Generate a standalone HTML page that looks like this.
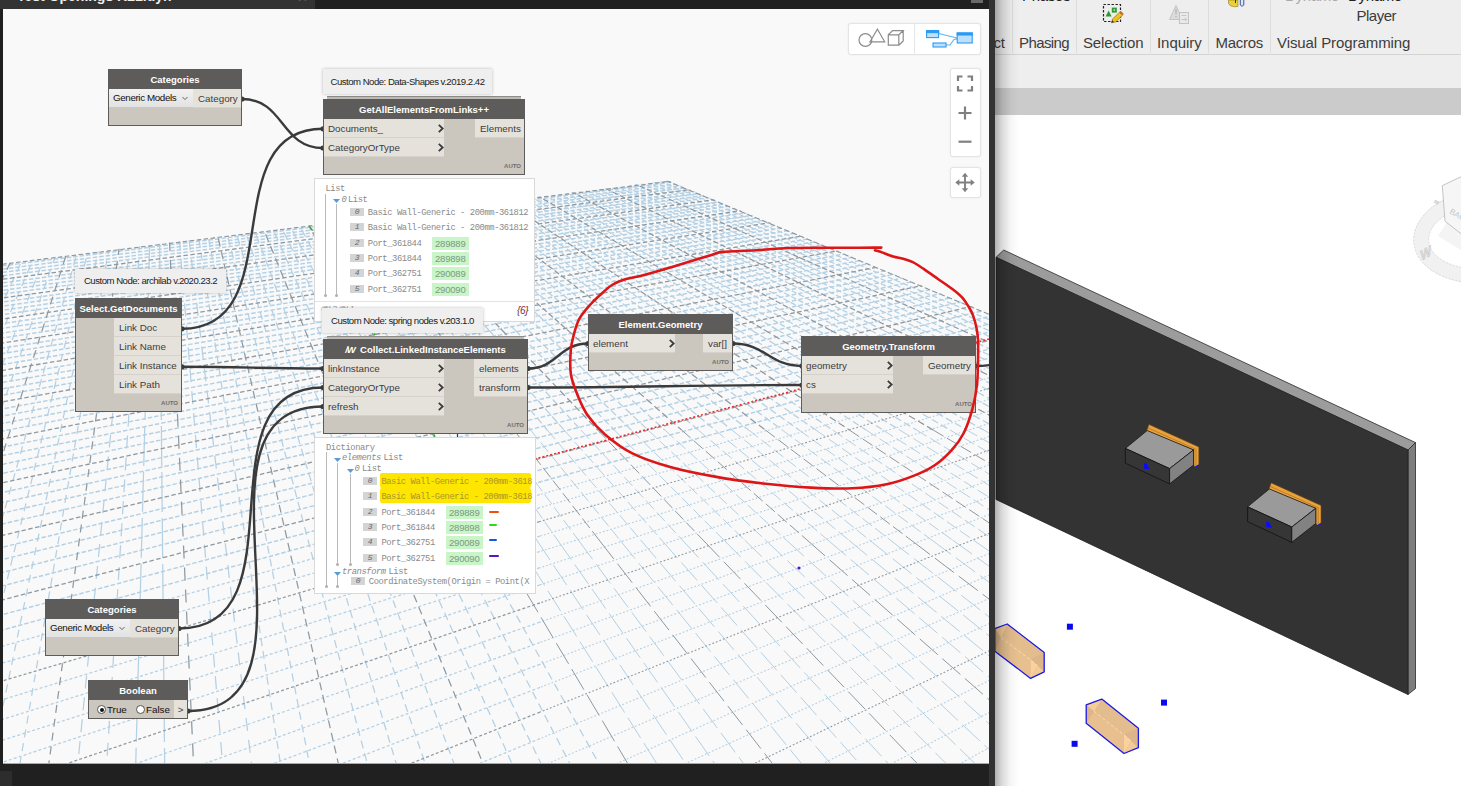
<!DOCTYPE html><html><head><meta charset="utf-8"><title>Dynamo - Revit</title><style>
html,body{margin:0;padding:0}
body{width:1461px;height:786px;overflow:hidden;position:relative;background:#fff;font-family:"Liberation Sans",sans-serif}
.abs{position:absolute}
#revit{position:absolute;left:0;top:0;width:1461px;height:786px;background:#fff}
#ribbon{position:absolute;left:990px;top:0;width:471px;height:54px;background:#eee;border-bottom:1px solid #d4d4d4}
#ribbon .sep{position:absolute;top:0;width:1px;height:53px;background:#dcdcdc}
#ribbon .lbl{position:absolute;top:34px;font-size:15px;line-height:18px;color:#3c3c3c;white-space:pre}
#band1{position:absolute;left:990px;top:55px;width:471px;height:33px;background:#eee}
#band2{position:absolute;left:990px;top:88px;width:471px;height:27px;background:#cbcbcb}
#dyn{position:absolute;left:0;top:0;width:995px;height:786px;background:#202020}
#tab{position:absolute;left:0;top:0;width:315px;height:9px;background:#333}
#canvas{position:absolute;left:3px;top:9px;width:986px;height:754px;background:#f9f9f9;overflow:hidden}
#rborder{position:absolute;left:989px;top:0;width:6px;height:786px;background:#333}
#shadow{position:absolute;left:995px;top:0;width:24px;height:786px;background:linear-gradient(to right,rgba(0,0,0,.30),rgba(0,0,0,.14) 30%,rgba(0,0,0,.04) 65%,rgba(0,0,0,0))}
.node{position:absolute;background:#cbc6be;border:1px solid #5e5c5a;box-sizing:border-box}
.node .hd{position:absolute;left:0;top:0;right:0;height:19px;background:#5e5c5a;color:#fff;font-weight:bold;font-size:9.5px;line-height:19px;text-align:center;white-space:pre}
.port{position:absolute;height:19px;background:#e5e2dc;color:#3c3c3c;font-size:9.8px;line-height:19px;white-space:pre;box-sizing:border-box}
.port.in{left:0;padding-left:4px;border-bottom:1px solid #d6d2cb}
.port.out{right:0;text-align:left;padding-left:5px;border-bottom:1px solid #d6d2cb}
.chev{position:absolute;right:0px;top:4.5px;width:7.2px;height:9px}
.auto{position:absolute;right:3px;bottom:5px;font-size:6px;font-weight:bold;color:#6f6c68;letter-spacing:0}
.cnl{position:absolute;background:#efefef;color:#222;font-size:9.6px;letter-spacing:-0.5px;white-space:pre;box-shadow:0 0 3px rgba(0,0,0,.25);box-sizing:border-box;text-align:center}
.watch{position:absolute;background:#fff;border:1px solid #d9d9d9;box-sizing:border-box;font-family:"Liberation Mono",monospace;font-size:8.8px;letter-spacing:-0.42px;color:#8a8a8a;white-space:pre;overflow:hidden}
.watch .t{position:absolute;line-height:10px;height:10px}
.watch .ix{position:absolute;width:14px;height:8px;background:#d4d4d4;color:#666;font-style:italic;text-align:center;line-height:8px;font-size:8px}
.watch .id{position:absolute;background:#c9f5c9;color:#7a9a80;height:13px;line-height:13px;padding:0 3px;font-family:"Liberation Sans",sans-serif;font-size:9.5px;letter-spacing:-0.2px}
.watch .vl{position:absolute;width:1px;background:#b9b9b9}
.ctl{position:absolute;background:#fff;border:1px solid #e4e4e4;border-radius:3px;box-sizing:border-box;box-shadow:0 0 2px rgba(0,0,0,.08)}
</style></head><body>
<div id="revit">
<div id="ribbon">
<div class="sep" style="left:22px"></div>
<div class="sep" style="left:86px"></div>
<div class="sep" style="left:160px"></div>
<div class="sep" style="left:218px"></div>
<div class="sep" style="left:280px"></div>
<div class="lbl" style="left:3.5px;letter-spacing:-0.3px">ct</div>
<div class="lbl" style="left:29px;letter-spacing:-0.6px">Phasing</div>
<div class="lbl" style="left:93px;letter-spacing:-0.15px">Selection</div>
<div class="lbl" style="left:167px;letter-spacing:-0.05px">Inquiry</div>
<div class="lbl" style="left:225.5px;letter-spacing:-0.3px">Macros</div>
<div class="lbl" style="left:287px;letter-spacing:-0.08px">Visual Programming</div>
<div class="lbl" style="left:366.5px;top:7px;letter-spacing:-0.5px">Player</div>
<div class="lbl" style="left:32px;top:-13.2px;letter-spacing:-0.3px;color:#222">Phases</div>
<div class="lbl" style="left:295px;top:-13px;letter-spacing:-0.3px;color:#aaa">Dynamo</div>
<div class="lbl" style="left:358px;top:-13px;letter-spacing:-0.3px;color:#222">Dynamo</div>
<svg class="abs" style="left:0;top:0" width="471" height="54" viewBox="990 0 471 54">
<rect x="1103.5" y="4.5" width="17" height="17" fill="none" stroke="#222" stroke-width="1.2" stroke-dasharray="2.4 1.6"/>
<path d="M1105.6 16.4L1108.6 10.6L1111.6 16.4Z" fill="#2f9a2f"/><rect x="1111.8" y="7.6" width="5" height="5" fill="#2f9a2f"/><rect x="1113.5" y="9.2" width="1.6" height="1.6" fill="#b8e8b8"/>
<path d="M1111.4 22.8L1112.6 19L1119.4 12.2L1122.6 15.2L1115.6 22Z" fill="#f2c21a" stroke="#7a5a20" stroke-width="0.6"/><path d="M1119.4 12.2L1120.8 10.9L1123.9 13.9L1122.6 15.2Z" fill="#c07030"/><path d="M1111.4 22.8L1112.2 20.2L1114 22Z" fill="#333"/>
<path d="M1169.5 19.5L1176 5.5L1182.5 19.5Z" fill="#dcdcdc" stroke="#c4c4c4" stroke-width="1"/><path d="M1176 9V14.5M1176 16V17.6" stroke="#bdbdbd" stroke-width="1.6"/>
<rect x="1179.5" y="12.5" width="9" height="11" fill="#e9e9e9" stroke="#c2c2c2" stroke-width="1"/><path d="M1181.5 15.5H1186.5M1181.5 19.5H1186.5M1185 18L1186.8 19.5L1185 21" stroke="#c2c2c2" stroke-width="0.9" fill="none"/>
<path d="M1228.5 0V3.5Q1230 6.8 1234.5 6.8L1238 6.4V0Z" fill="#e9cf3a" stroke="#8a7a20" stroke-width="0.6"/><path d="M1240.3 0V5Q1242 7.6 1243.8 5V0" fill="#dfe6f2" stroke="#3a5a9a" stroke-width="1"/><path d="M1235.5 0V3" stroke="#333" stroke-width="1"/>
</svg>
</div><div id="band1"></div><div id="band2"></div>
<svg class="abs" style="left:990px;top:115px" width="471" height="671" viewBox="990 115 471 671">
<g fill="none"><ellipse cx="1483" cy="236" rx="62" ry="39.5" stroke="#f1f1f1" stroke-width="15" transform="rotate(-6 1483 236)"/><ellipse cx="1483" cy="236" rx="69.5" ry="46.5" stroke="#d2d2d2" stroke-width="0.8" stroke-dasharray="2 1.5" transform="rotate(-6 1483 236)"/><ellipse cx="1483" cy="236" rx="54.5" ry="32.5" stroke="#d8d8d8" stroke-width="0.8" stroke-dasharray="2 1.5" transform="rotate(-6 1483 236)"/></g>
<path d="M1447 222L1470 238L1461 250L1438 236Z" fill="#f4f4f4"/>
<path d="M1442.3 185.6L1471 172V241.5L1445 221.2Z" fill="#f6f6f6" stroke="#bdbdbd" stroke-width="0.9"/>
<text x="0" y="0" font-family="Liberation Sans, sans-serif" font-size="8" fill="#c4c8cc" transform="translate(1449 213) rotate(30)">BACK</text>
<text x="0" y="0" font-family="Liberation Sans, sans-serif" font-size="13" font-weight="bold" fill="#dcdcdc" stroke="#c4c4c4" stroke-width="0.4" transform="translate(1421 261) rotate(-30) skewX(-25)">W</text>
<text x="0" y="0" font-family="Liberation Sans, sans-serif" font-size="6" font-weight="bold" fill="#d8d8d8" stroke="#c6c6c6" stroke-width="0.3" transform="translate(1437 205) rotate(-55)">S</text>
<polygon points="996.0,257.3 1003.7,250.0 1415.5,442.6 1408.0,450.0" fill="#9c9c9c" stroke="#2a2a2a" stroke-width="0.8" stroke-linejoin="round"/>
<polygon points="1408.0,450.0 1415.5,442.6 1415.5,688.5 1408.0,694.5" fill="#7e7e7e" stroke="#2a2a2a" stroke-width="0.8" stroke-linejoin="round"/>
<polygon points="996.0,257.3 1408.0,450.0 1408.0,694.5 996.0,499.5" fill="#333333" stroke="#222" stroke-width="0.8" stroke-linejoin="round"/>
<polygon points="1146.7,431.0 1149.0,424.5 1198.8,447.1 1198.8,464.4 1195.6,467.4 1193.6,464.9 1193.6,449.9" fill="#e8a33d" stroke="#7a4a10" stroke-width="0.6" stroke-linejoin="round"/><path d="M1147.8 427.9L1196.0 449.3L1196.0 465.9" fill="none" stroke="#b87420" stroke-width="0.8"/><polygon points="1125.4,448.4 1147.2,430.5 1193.6,449.9 1169.6,468.6" fill="#9a9a9a" stroke="#1a1a1a" stroke-width="0.8" stroke-linejoin="round"/><polygon points="1125.4,448.4 1169.6,468.6 1169.6,483.9 1125.4,463.2" fill="#363636" stroke="#111" stroke-width="0.8" stroke-linejoin="round"/><polygon points="1169.6,468.6 1193.6,449.9 1193.6,465.1 1169.6,483.9" fill="#828282" stroke="#111" stroke-width="0.8" stroke-linejoin="round"/><path d="M1144.0 468.6v-5.4l2.8 0.6l3 5.6z" fill="#0a0aff"/><path d="M1194.6 467.5l4 -2.4" stroke="#1010ff" stroke-width="1.2"/>
<polygon points="1268.9,489.4 1271.2,482.9 1321.0,505.5 1321.0,522.8 1317.8,525.8 1315.8,523.3 1315.8,508.3" fill="#e8a33d" stroke="#7a4a10" stroke-width="0.6" stroke-linejoin="round"/><path d="M1270.0 486.3L1318.2 507.7L1318.2 524.3" fill="none" stroke="#b87420" stroke-width="0.8"/><polygon points="1247.6,506.8 1269.4,488.9 1315.8,508.3 1291.8,527.0" fill="#9a9a9a" stroke="#1a1a1a" stroke-width="0.8" stroke-linejoin="round"/><polygon points="1247.6,506.8 1291.8,527.0 1291.8,542.3 1247.6,521.6" fill="#363636" stroke="#111" stroke-width="0.8" stroke-linejoin="round"/><polygon points="1291.8,527.0 1315.8,508.3 1315.8,523.5 1291.8,542.3" fill="#828282" stroke="#111" stroke-width="0.8" stroke-linejoin="round"/><path d="M1266.2 527.0v-5.4l2.8 0.6l3 5.6z" fill="#0a0aff"/><path d="M1316.8 525.9l4 -2.4" stroke="#1010ff" stroke-width="1.2"/>
<polygon points="994.8,628.6 1007.2,624.0 1044.2,652.4 1044.2,671.8 1030.6,678.4 994.8,651.2" fill="#e9c292"/><polygon points="994.8,628.6 1007.2,624.0 1044.2,652.4 1030.6,659.0" fill="#e4bd8e"/><polygon points="994.8,628.6 1030.6,659.0 1030.6,678.4 994.8,651.2" fill="#e8c090"/><polygon points="1030.6,659.0 1044.2,652.4 1044.2,671.8 1030.6,678.4" fill="#ddb58a"/><polygon points="1030.6,659.0 1030.6,678.4 1037.4,665.4" fill="#f9d19c"/><polygon points="1030.6,678.4 1044.2,671.8 1037.4,665.4" fill="#f4ca96"/><polygon points="994.8,628.6 1007.2,624.0 1001.0,637.6" fill="#f6cd9a"/><polygon points="994.8,628.6 994.8,651.2 1001.0,637.6" fill="#dcb58a"/><path d="M1001.0 637.6L1037.4 665.4" fill="none" stroke="#f7dcb4" stroke-width="1" stroke-dasharray="3 2.5"/><polygon points="994.8,628.6 1007.2,624.0 1044.2,652.4 1044.2,671.8 1030.6,678.4 994.8,651.2" fill="none" stroke="#1a1ae6" stroke-width="1.3" stroke-linejoin="round"/>
<polygon points="1086.2,704.9 1101.8,699.1 1138.4,728.2 1138.4,747.7 1124.0,753.5 1086.2,723.2" fill="#e9c292"/><polygon points="1086.2,704.9 1101.8,699.1 1138.4,728.2 1124.0,734.0" fill="#e4bd8e"/><polygon points="1086.2,704.9 1124.0,734.0 1124.0,753.5 1086.2,723.2" fill="#e8c090"/><polygon points="1124.0,734.0 1138.4,728.2 1138.4,747.7 1124.0,753.5" fill="#ddb58a"/><polygon points="1124.0,734.0 1124.0,753.5 1131.2,740.9" fill="#f9d19c"/><polygon points="1124.0,753.5 1138.4,747.7 1131.2,740.9" fill="#f4ca96"/><polygon points="1086.2,704.9 1101.8,699.1 1094.0,711.2" fill="#f6cd9a"/><polygon points="1086.2,704.9 1086.2,723.2 1094.0,711.2" fill="#dcb58a"/><path d="M1094.0 711.2L1131.2 740.9" fill="none" stroke="#f7dcb4" stroke-width="1" stroke-dasharray="3 2.5"/><polygon points="1086.2,704.9 1101.8,699.1 1138.4,728.2 1138.4,747.7 1124.0,753.5 1086.2,723.2" fill="none" stroke="#1a1ae6" stroke-width="1.3" stroke-linejoin="round"/>
<rect x="1066.9" y="623.7" width="6" height="6" fill="#0a0af0"/>
<rect x="1161.0" y="699.6" width="6" height="6" fill="#0a0af0"/>
<rect x="1071.6" y="740.8" width="6" height="6" fill="#0a0af0"/>
</svg>
</div>
<div id="dyn"><div id="tab"></div>
<div class="abs" style="left:17px;top:-11.8px;font-size:14px;font-weight:bold;color:#f0f0f0;line-height:16px;white-space:pre">Test Openings R21.dyn</div>
<div class="abs" style="left:297px;top:-9px;font-size:13px;color:#6a6a6a;line-height:13px">✕</div>
<div class="abs" style="left:971px;top:0;width:12px;height:3px;background:#6a6a6a"></div>
<div class="abs" style="left:0;top:771px;width:12px;height:15px;background:#2d2d2d"></div>
<div class="abs" style="left:3px;top:762px;width:986px;height:2px;background:#a9a9a9"></div>

<div id="canvas"><div class="abs" style="left:-3px;top:-9px;width:1461px;height:786px">
<svg class="grid" width="1461" height="786" viewBox="0 0 1461 786" style="position:absolute;left:0;top:0">
<defs><clipPath id="gclip"><polygon points="3.0,263.3 668.2,180.5 989.0,313.4 989,763 3,763"/></clipPath></defs>
<g clip-path="url(#gclip)" fill="none" stroke-width="1.25">
<path stroke="#b3d0e4" stroke-dasharray="3 2.2" d="M540.0 494.5L-10.0 649.7M540.0 507.7L-10.0 666.7M540.0 536.1L-10.0 703.5M540.0 551.5L-10.0 723.3M540.0 567.7L-10.0 744.3M540.0 584.8L-10.0 766.4M540.0 622.1L-10.0 814.7M540.0 642.5L-10.0 841.1M540.0 664.3L-10.0 869.1M540.0 687.4L-10.0 899.0M540.0 738.6L-10.0 965.2M540.0 767.0L-10.0 1002.0M540.0 797.6L-10.0 1041.5M540.0 830.6L-10.0 1084.2M540.0 905.2L-10.0 1180.5M540.0 947.5L-10.0 1235.2M540.0 993.8L-10.0 1295.0M540.0 1044.6L-10.0 1360.7"/>
<path stroke="#b3d0e4" stroke-width="1.1" stroke-dasharray="1.8 2" d="M1000.0 364.7L540.0 494.5M1000.0 374.7L540.0 507.7M1000.0 396.1L540.0 536.1M1000.0 407.7L540.0 551.5M1000.0 420.0L540.0 567.7M1000.0 432.9L540.0 584.8M1000.0 461.1L540.0 622.1M1000.0 476.5L540.0 642.5M1000.0 492.9L540.0 664.3M1000.0 510.4L540.0 687.4M1000.0 549.1L540.0 738.6M1000.0 570.6L540.0 767.0M1000.0 593.7L540.0 797.6M1000.0 618.6L540.0 830.6M1000.0 674.9L540.0 905.2M1000.0 706.8L540.0 947.5M1000.0 741.8L540.0 993.8M1000.0 780.2L540.0 1044.6"/>
<path stroke="#b3d0e4" stroke-width="1.45" stroke-dasharray="4.5 2" d="M1000.0 141.3L-10.0 267.3M1000.0 143.2L-10.0 270.6M1000.0 145.1L-10.0 274.0M1000.0 147.2L-10.0 277.4M1000.0 151.3L-10.0 284.5M1000.0 153.4L-10.0 288.2M1000.0 155.6L-10.0 292.0M1000.0 157.9L-10.0 295.8M1000.0 162.6L-10.0 303.8M1000.0 165.0L-10.0 307.9M1000.0 167.4L-10.0 312.1M1000.0 170.0L-10.0 316.5M1000.0 175.2L-10.0 325.5M1000.0 178.0L-10.0 330.2M1000.0 180.8L-10.0 335.0M1000.0 183.7L-10.0 339.9M1000.0 189.7L-10.0 350.2M1000.0 192.8L-10.0 355.5M1000.0 196.0L-10.0 361.0M1000.0 199.3L-10.0 366.6M1000.0 206.2L-10.0 378.4M1000.0 209.8L-10.0 384.6M1000.0 213.5L-10.0 391.0M1000.0 217.3L-10.0 397.5M1000.0 225.3L-10.0 411.2M1000.0 229.5L-10.0 418.4M1000.0 233.9L-10.0 425.8M1000.0 238.3L-10.0 433.5M1000.0 247.8L-10.0 449.6M1000.0 252.7L-10.0 458.1M1000.0 257.9L-10.0 466.9M1000.0 263.2L-10.0 476.0M1000.0 274.4L-10.0 495.2M1000.0 280.3L-10.0 505.4M1000.0 286.5L-10.0 515.9M1000.0 292.9L-10.0 526.9M1000.0 306.6L-10.0 550.2M1000.0 313.8L-10.0 562.6M1000.0 321.4L-10.0 575.6M1000.0 329.3L-10.0 589.1M1000.0 346.2L-10.0 618.0M1000.0 355.2L-10.0 633.5"/>
<path stroke="#b3d0e4" stroke-dasharray="8 6" d="M47.1 150.0L-337.5 780.0M53.7 150.0L-307.9 780.0M60.3 150.0L-278.4 780.0M73.4 150.0L-219.3 780.0M79.9 150.0L-189.7 780.0M86.5 150.0L-160.2 780.0M93.1 150.0L-130.6 780.0M106.2 150.0L-71.6 780.0M112.8 150.0L-42.0 780.0M119.3 150.0L-12.5 780.0M125.9 150.0L17.1 780.0"/>
<path stroke="#b3d0e4" stroke-dasharray="13 9" d="M139.0 150.0L76.2 780.0M145.6 150.0L105.7 780.0M171.9 150.0L223.9 780.0M178.4 150.0L253.4 780.0"/>
<path stroke="#b3d0e4" stroke-dasharray="40 6" d="M152.2 150.0L135.3 780.0M158.7 150.0L164.8 780.0"/>
<path stroke="#b3d0e4" stroke-dasharray="8 5" d="M185.0 150.0L283.0 780.0M191.6 150.0L312.5 780.0M204.7 150.0L371.6 780.0M211.3 150.0L401.2 780.0M217.8 150.0L430.7 780.0M224.4 150.0L460.2 780.0M237.5 150.0L519.3 780.0M244.1 150.0L548.9 780.0M250.6 150.0L578.4 780.0M257.2 150.0L608.0 780.0"/>
<path stroke="#b3d0e4" stroke-dasharray="5.5 2.5" d="M270.3 150.0L383.7 330.0M276.9 150.0L396.8 330.0M283.5 150.0L410.0 330.0M290.0 150.0L423.1 330.0M303.2 150.0L449.3 330.0M309.7 150.0L462.5 330.0M316.3 150.0L475.6 330.0M322.9 150.0L488.7 330.0M336.0 150.0L515.0 330.0M342.6 150.0L528.1 330.0M349.1 150.0L541.3 330.0M355.7 150.0L554.4 330.0M368.8 150.0L580.7 330.0M375.4 150.0L593.8 330.0M382.0 150.0L606.9 330.0M388.5 150.0L620.0 330.0M401.7 150.0L646.3 330.0M408.2 150.0L659.4 330.0M414.8 150.0L672.6 330.0M421.3 150.0L685.7 330.0M434.5 150.0L712.0 330.0M441.0 150.0L725.1 330.0M447.6 150.0L738.2 330.0M454.2 150.0L751.4 330.0M467.3 150.0L777.6 330.0M473.9 150.0L790.7 330.0M480.4 150.0L803.9 330.0M487.0 150.0L817.0 330.0M500.1 150.0L843.3 330.0M506.7 150.0L856.4 330.0M513.3 150.0L869.5 330.0M519.8 150.0L882.7 330.0M533.0 150.0L908.9 330.0M539.5 150.0L922.1 330.0M546.1 150.0L935.2 330.0M552.7 150.0L948.3 330.0M565.8 150.0L974.6 330.0M572.4 150.0L987.7 330.0M578.9 150.0L1000.8 330.0M585.5 150.0L1014.0 330.0"/>
<path stroke="#b3d0e4" stroke-dasharray="7 3.5" d="M383.7 330.0L446.7 430.0M396.8 330.0L463.4 430.0M410.0 330.0L480.2 430.0M423.1 330.0L497.0 430.0M449.3 330.0L530.6 430.0M462.5 330.0L547.3 430.0M475.6 330.0L564.1 430.0M488.7 330.0L580.9 430.0M515.0 330.0L614.4 430.0M528.1 330.0L631.2 430.0M541.3 330.0L648.0 430.0M554.4 330.0L664.8 430.0M580.7 330.0L698.3 430.0M593.8 330.0L715.1 430.0M606.9 330.0L731.9 430.0M620.0 330.0L748.7 430.0M646.3 330.0L782.2 430.0M659.4 330.0L799.0 430.0M672.6 330.0L815.8 430.0M685.7 330.0L832.6 430.0M712.0 330.0L866.1 430.0M725.1 330.0L882.9 430.0M738.2 330.0L899.7 430.0M751.4 330.0L916.5 430.0M777.6 330.0L950.0 430.0M790.7 330.0L966.8 430.0M803.9 330.0L983.6 430.0M817.0 330.0L1000.3 430.0M843.3 330.0L1033.9 430.0M856.4 330.0L1050.7 430.0M869.5 330.0L1067.5 430.0M882.7 330.0L1084.2 430.0M908.9 330.0L1117.8 430.0M922.1 330.0L1134.6 430.0M935.2 330.0L1151.3 430.0M948.3 330.0L1168.1 430.0M974.6 330.0L1201.7 430.0M987.7 330.0L1218.5 430.0M1000.8 330.0L1235.2 430.0M1014.0 330.0L1252.0 430.0"/>
<path stroke="#b3d0e4" stroke-dasharray="12 4" stroke-width="1" d="M446.7 430.0L515.9 540.0M463.4 430.0L536.7 540.0M480.2 430.0L557.5 540.0M497.0 430.0L578.3 540.0M530.6 430.0L619.9 540.0M547.3 430.0L640.7 540.0M564.1 430.0L661.5 540.0M580.9 430.0L682.3 540.0M614.4 430.0L723.8 540.0M631.2 430.0L744.6 540.0M648.0 430.0L765.4 540.0M664.8 430.0L786.2 540.0M698.3 430.0L827.8 540.0M715.1 430.0L848.6 540.0M731.9 430.0L869.4 540.0M748.7 430.0L890.2 540.0M782.2 430.0L931.7 540.0M799.0 430.0L952.5 540.0M815.8 430.0L973.3 540.0M832.6 430.0L994.1 540.0M866.1 430.0L1035.7 540.0M882.9 430.0L1056.5 540.0M899.7 430.0L1077.3 540.0M916.5 430.0L1098.1 540.0M950.0 430.0L1139.6 540.0M966.8 430.0L1160.4 540.0M983.6 430.0L1181.2 540.0M1000.3 430.0L1202.0 540.0M1033.9 430.0L1243.6 540.0M1050.7 430.0L1264.4 540.0M1067.5 430.0L1285.2 540.0M1084.2 430.0L1306.0 540.0M1117.8 430.0L1347.5 540.0M1134.6 430.0L1368.3 540.0M1151.3 430.0L1389.1 540.0M1168.1 430.0L1409.9 540.0M1201.7 430.0L1451.5 540.0M1218.5 430.0L1472.3 540.0M1235.2 430.0L1493.1 540.0M1252.0 430.0L1513.9 540.0"/>
<path stroke="#b3d0e4" stroke-dasharray="24 6" stroke-width="1" d="M515.9 540.0L667.1 780.0M536.7 540.0L696.6 780.0M557.5 540.0L726.1 780.0M578.3 540.0L755.7 780.0M619.9 540.0L814.8 780.0M640.7 540.0L844.3 780.0M661.5 540.0L873.9 780.0M682.3 540.0L903.4 780.0M723.8 540.0L962.5 780.0M744.6 540.0L992.0 780.0M765.4 540.0L1021.6 780.0M786.2 540.0L1051.1 780.0M827.8 540.0L1110.2 780.0M848.6 540.0L1139.8 780.0M869.4 540.0L1169.3 780.0M890.2 540.0L1198.9 780.0M931.7 540.0L1257.9 780.0M952.5 540.0L1287.5 780.0M973.3 540.0L1317.0 780.0M994.1 540.0L1346.6 780.0M1035.7 540.0L1405.7 780.0M1056.5 540.0L1435.2 780.0M1077.3 540.0L1464.8 780.0M1098.1 540.0L1494.3 780.0M1139.6 540.0L1553.4 780.0M1160.4 540.0L1582.9 780.0M1181.2 540.0L1612.5 780.0M1202.0 540.0L1642.0 780.0M1243.6 540.0L1701.1 780.0M1264.4 540.0L1730.7 780.0M1285.2 540.0L1760.2 780.0M1306.0 540.0L1789.7 780.0M1347.5 540.0L1848.8 780.0M1368.3 540.0L1878.4 780.0M1389.1 540.0L1907.9 780.0M1409.9 540.0L1937.5 780.0M1451.5 540.0L1996.6 780.0M1472.3 540.0L2026.1 780.0M1493.1 540.0L2055.6 780.0M1513.9 540.0L2085.2 780.0"/>
<path stroke="#8e99a1" stroke-dasharray="8 6" d="M66.8 150.0L-248.8 780.0M99.6 150.0L-101.1 780.0M132.5 150.0L46.6 780.0"/>
<path stroke="#8e99a1" stroke-dasharray="13 9" d="M165.3 150.0L194.3 780.0"/>
<path stroke="#8e99a1" stroke-dasharray="8 5" d="M198.1 150.0L342.1 780.0M231.0 150.0L489.8 780.0"/>
<path stroke="#8e99a1" stroke-dasharray="5.5 2.5" d="M263.8 150.0L370.6 330.0M296.6 150.0L436.2 330.0M329.4 150.0L501.9 330.0M362.3 150.0L567.5 330.0M395.1 150.0L633.2 330.0M427.9 150.0L698.8 330.0M460.7 150.0L764.5 330.0M493.6 150.0L830.1 330.0M526.4 150.0L895.8 330.0M559.2 150.0L961.4 330.0M592.1 150.0L1027.1 330.0"/>
<path stroke="#8e99a1" stroke-dasharray="7 3.5" d="M370.6 330.0L429.9 430.0M436.2 330.0L513.8 430.0M501.9 330.0L597.7 430.0M567.5 330.0L681.6 430.0M633.2 330.0L765.4 430.0M698.8 330.0L849.3 430.0M764.5 330.0L933.2 430.0M830.1 330.0L1017.1 430.0M895.8 330.0L1101.0 430.0M961.4 330.0L1184.9 430.0M1027.1 330.0L1268.8 430.0"/>
<path stroke="#8e99a1" stroke-dasharray="12 4" stroke-width="1" d="M429.9 430.0L495.1 540.0M513.8 430.0L599.1 540.0M597.7 430.0L703.0 540.0M681.6 430.0L807.0 540.0M765.4 430.0L910.9 540.0M849.3 430.0L1014.9 540.0M933.2 430.0L1118.9 540.0M1017.1 430.0L1222.8 540.0M1101.0 430.0L1326.8 540.0M1184.9 430.0L1430.7 540.0M1268.8 430.0L1534.7 540.0"/>
<path stroke="#8e99a1" stroke-dasharray="24 6" stroke-width="1" d="M495.1 540.0L637.5 780.0M599.1 540.0L785.2 780.0M703.0 540.0L933.0 780.0M807.0 540.0L1080.7 780.0M910.9 540.0L1228.4 780.0M1014.9 540.0L1376.1 780.0M1118.9 540.0L1523.8 780.0M1222.8 540.0L1671.6 780.0M1326.8 540.0L1819.3 780.0M1430.7 540.0L1967.0 780.0M1534.7 540.0L2114.7 780.0"/>
<path stroke="#8e99a1" stroke-dasharray="3 2.2" d="M540.0 521.5L-10.0 684.6M540.0 602.9L-10.0 789.8M540.0 712.1L-10.0 931.0M540.0 866.4L-10.0 1130.4"/>
<path stroke="#8e99a1" stroke-width="1.1" stroke-dasharray="1.8 2" d="M1000.0 385.1L540.0 521.5M1000.0 446.6L540.0 602.9M1000.0 529.1L540.0 712.1M1000.0 645.6L540.0 866.4"/>
<path stroke="#8e99a1" stroke-width="1.3" stroke-dasharray="4.5 2.5" d="M1000 140.3L-10 265.7M1000.0 149.2L-10.0 280.9M1000.0 160.2L-10.0 299.7M1000.0 172.6L-10.0 320.9M1000.0 186.6L-10.0 345.0M1000.0 202.7L-10.0 372.5M1000.0 221.3L-10.0 404.2M1000.0 243.0L-10.0 441.4M1000.0 268.7L-10.0 485.4M1000.0 299.6L-10.0 538.3M1000.0 337.5L-10.0 603.2"/>
</g></svg>
<svg class="abs" style="left:0;top:0" width="1461" height="786" viewBox="0 0 1461 786">
<path d="M380 500L989 339" stroke="#ee2a2a" stroke-width="1.5" stroke-dasharray="2 2" fill="none"/>
<circle cx="799" cy="568" r="1.6" fill="#5a10c8"/>
<path d="M433 432L435 437" stroke="#22aa22" stroke-width="1.2"/><path d="M457.5 431V438" stroke="#2222ee" stroke-width="1.2"/>
<path d="M309.5 226L312.5 230.5" stroke="#22aa22" stroke-width="1.2"/>
<path d="M374 334.3h1.6" stroke="#22aa22" stroke-width="1.4"/></svg>

<svg class="abs" style="left:0;top:0" width="1461" height="786" viewBox="0 0 1461 786"><g fill="none" stroke="#3a3a3a" stroke-width="2.4">
<path d="M242 99C284.6 99 280.4 148 323 148"/>
<path d="M182 328.8C292.1 328.8 212.9 128.8 323 128.8"/>
<path d="M182 366.8C245.5 366.8 259.5 368.5 323 368.5"/>
<path d="M179 628.5C305.3 628.5 196.7 387.5 323 387.5"/>
<path d="M188 711C337.9 711 173.1 406.5 323 406.5"/>
<path d="M528 368.5C557.2 368.5 558.8 343.5 588 343.5"/>
<path d="M528 387.5C651.3 387.5 678.7 385 802 385"/>
<path d="M733 343.5C765.7 343.5 769.3 366 802 366"/>
<path d="M976 366C991.4 366 994.6 363 1010 363"/>
</g><g fill="#3a3a3a">
<circle cx="242" cy="99" r="2.6"/><circle cx="323" cy="148" r="2.6"/>
<circle cx="182" cy="328.8" r="2.6"/><circle cx="323" cy="128.8" r="2.6"/>
<circle cx="182" cy="366.8" r="2.6"/><circle cx="323" cy="368.5" r="2.6"/>
<circle cx="179" cy="628.5" r="2.6"/><circle cx="323" cy="387.5" r="2.6"/>
<circle cx="188" cy="711" r="2.6"/><circle cx="323" cy="406.5" r="2.6"/>
<circle cx="528" cy="368.5" r="2.6"/><circle cx="588" cy="343.5" r="2.6"/>
<circle cx="528" cy="387.5" r="2.6"/><circle cx="802" cy="385" r="2.6"/>
<circle cx="733" cy="343.5" r="2.6"/><circle cx="802" cy="366" r="2.6"/>
<circle cx="976" cy="366" r="2.6"/><circle cx="1010" cy="363" r="2.6"/>
</g></svg>
<div class="node" style="left:108px;top:69px;width:134px;height:57px"><div class="hd" style="">Categories</div><div class="port out" style="top:19px;width:48px">Category</div><div class="abs" style="left:0;top:19px;width:84px;height:18px;background:linear-gradient(#f2f2f2,#e2e2e2);color:#111;font-size:9.8px;letter-spacing:-0.38px;line-height:17px;padding-left:4px;box-sizing:border-box;white-space:pre">Generic Models<svg class="abs" style="left:73px;top:7px" width="6" height="5" viewBox="0 0 6 5"><path d="M0.5 1L3 3.6L5.5 1" fill="none" stroke="#666" stroke-width="1"/></svg></div></div>
<div class="node" style="left:45px;top:599px;width:134px;height:57px"><div class="hd" style="">Categories</div><div class="port out" style="top:19px;width:48px">Category</div><div class="abs" style="left:0;top:19px;width:84px;height:18px;background:linear-gradient(#f2f2f2,#e2e2e2);color:#111;font-size:9.8px;letter-spacing:-0.38px;line-height:17px;padding-left:4px;box-sizing:border-box;white-space:pre">Generic Models<svg class="abs" style="left:73px;top:7px" width="6" height="5" viewBox="0 0 6 5"><path d="M0.5 1L3 3.6L5.5 1" fill="none" stroke="#666" stroke-width="1"/></svg></div></div>
<div class="abs" style="left:327px;top:96px;width:194px;height:3px;background:#bdbab5;border-top:1px solid #8e8c89"></div>
<div class="node" style="left:323px;top:99px;width:202px;height:76px"><div class="hd" style="">GetAllElementsFromLinks++</div><div class="port in" style="top:19px;width:120px">Documents_<svg class="chev" viewBox="0 0 8 10"><path d="M2 1L6.3 5L2 9" fill="none" stroke="#3a3a3a" stroke-width="2"/></svg></div><div class="port in" style="top:38px;width:120px">CategoryOrType<svg class="chev" viewBox="0 0 8 10"><path d="M2 1L6.3 5L2 9" fill="none" stroke="#3a3a3a" stroke-width="2"/></svg></div><div class="port out" style="top:19px;width:49px">Elements</div><div class="auto">AUTO</div></div>
<div class="abs" style="left:327px;top:336px;width:197px;height:3px;background:#bdbab5;border-top:1px solid #8e8c89"></div>
<div class="node" style="left:323px;top:339px;width:205px;height:95px"><div class="hd" style=""><i style="letter-spacing:-1px">/W</i>  Collect.LinkedInstanceElements</div><div class="port in" style="top:19px;width:120px">linkInstance<svg class="chev" viewBox="0 0 8 10"><path d="M2 1L6.3 5L2 9" fill="none" stroke="#3a3a3a" stroke-width="2"/></svg></div><div class="port in" style="top:38px;width:120px">CategoryOrType<svg class="chev" viewBox="0 0 8 10"><path d="M2 1L6.3 5L2 9" fill="none" stroke="#3a3a3a" stroke-width="2"/></svg></div><div class="port in" style="top:57px;width:120px">refresh<svg class="chev" viewBox="0 0 8 10"><path d="M2 1L6.3 5L2 9" fill="none" stroke="#3a3a3a" stroke-width="2"/></svg></div><div class="port out" style="top:19px;width:53px">elements</div><div class="port out" style="top:38px;width:53px">transform</div><div class="auto">AUTO</div></div>
<div class="node" style="left:75px;top:298px;width:107px;height:114px"><div class="hd" style="">Select.GetDocuments</div><div class="port out" style="top:19px;width:67px">Link Doc</div><div class="port out" style="top:38px;width:67px">Link Name</div><div class="port out" style="top:57px;width:67px">Link Instance</div><div class="port out" style="top:76px;width:67px">Link Path</div><div class="auto">AUTO</div></div>
<div class="node" style="left:588px;top:314px;width:145px;height:57px"><div class="hd" style="">Element.Geometry</div><div class="port in" style="top:19px;width:86px">element<svg class="chev" viewBox="0 0 8 10"><path d="M2 1L6.3 5L2 9" fill="none" stroke="#3a3a3a" stroke-width="2"/></svg></div><div class="port out" style="top:19px;width:29px">var[]</div><div class="auto">AUTO</div></div>
<div class="node" style="left:801px;top:336px;width:175px;height:77px"><div class="hd" style="">Geometry.Transform</div><div class="port in" style="top:19px;width:91px">geometry<svg class="chev" viewBox="0 0 8 10"><path d="M2 1L6.3 5L2 9" fill="none" stroke="#3a3a3a" stroke-width="2"/></svg></div><div class="port in" style="top:38px;width:91px">cs<svg class="chev" viewBox="0 0 8 10"><path d="M2 1L6.3 5L2 9" fill="none" stroke="#3a3a3a" stroke-width="2"/></svg></div><div class="port out" style="top:19px;width:52px">Geometry</div><div class="auto">AUTO</div></div>
<div class="node" style="left:88px;top:680px;width:100px;height:39px"><div class="hd" style="">Boolean</div><div class="abs" style="left:0;top:20px;width:86px;height:18px;color:#111;font-size:9.8px;line-height:18px;white-space:pre"><span class="abs" style="left:8px;top:4px;width:7px;height:7px;border:1px solid #555;border-radius:50%;background:#fff"></span><span class="abs" style="left:10.5px;top:6.5px;width:4px;height:4px;border-radius:50%;background:#111"></span><span class="abs" style="left:18px">True</span><span class="abs" style="left:47px;top:4px;width:7px;height:7px;border:1px solid #555;border-radius:50%;background:#fff"></span><span class="abs" style="left:57px">False</span></div><div class="port out" style="top:19px;width:13px;height:18px;border:0;text-align:center;padding:0;line-height:19px">&gt;</div></div>
<div class="cnl" style="left:323px;top:69px;width:169px;height:25px;line-height:25px">Custom Node: Data-Shapes v.2019.2.42</div>
<div class="cnl" style="left:75px;top:269px;width:151px;height:24px;line-height:24px">Custom Node: archilab v.2020.23.2</div>
<div class="watch" style="left:314px;top:178px;width:221px;height:144px">
<span class="t" style="left:10.5px;top:4.8px;">List</span>
<svg class="abs" style="left:18px;top:20px" width="7" height="4" viewBox="0 0 7 4"><path d="M0 0H7L3.5 4Z" fill="#5b9bd5"/></svg><span class="t" style="left:26.5px;top:15.8px;font-style:italic">0</span><span class="t" style="left:33px;top:15.8px;">List</span>
<span class="ix" style="left:35px;top:29px">0</span><span class="t" style="left:52.80000000000001px;top:28.8px;">Basic Wall-Generic - 200mm-361812</span>
<span class="ix" style="left:35px;top:44px">1</span><span class="t" style="left:52.80000000000001px;top:43.8px;">Basic Wall-Generic - 200mm-361812</span>
<span class="ix" style="left:35px;top:60px">2</span><span class="t" style="left:52.80000000000001px;top:59.8px;">Port_361844</span>
<span class="id" style="left:117px;top:58px">289889</span>
<span class="ix" style="left:35px;top:75px">3</span><span class="t" style="left:52.80000000000001px;top:74.8px;">Port_361844</span>
<span class="id" style="left:117px;top:73px">289898</span>
<span class="ix" style="left:35px;top:90px">4</span><span class="t" style="left:52.80000000000001px;top:89.8px;">Port_362751</span>
<span class="id" style="left:117px;top:88px">290089</span>
<span class="ix" style="left:35px;top:106px">5</span><span class="t" style="left:52.80000000000001px;top:105.8px;">Port_362751</span>
<span class="id" style="left:117px;top:104px">290090</span>
<span class="vl" style="left:10px;top:15px;height:101px"></span><span class="abs" style="left:9px;top:115px;width:3px;height:3px;border-radius:50%;background:#b0b0b0"></span><span class="vl" style="left:21px;top:25px;height:91px"></span><span class="abs" style="left:20px;top:115px;width:3px;height:3px;border-radius:50%;background:#b0b0b0"></span>
<span class="abs" style="left:0;top:122px;width:221px;height:1px;background:#e3e3e3"></span>
<span class="abs" style="left:202px;top:126px;font-family:'Liberation Sans',sans-serif;font-style:italic;font-size:10px;letter-spacing:-0.3px;color:#7a2c2c;line-height:12px">{6}</span>
<span class="abs" style="left:6px;top:126px;font-family:'Liberation Sans',sans-serif;font-size:8px;color:#9a9a9a;line-height:8px">@L2 @L1</span>
</div>
<div class="watch" style="left:314px;top:437px;width:222px;height:157px">
<span class="t" style="left:11px;top:4.8px;">Dictionary</span>
<svg class="abs" style="left:19px;top:19.5px" width="7" height="4" viewBox="0 0 7 4"><path d="M0 0H7L3.5 4Z" fill="#5b9bd5"/></svg><span class="t" style="left:27px;top:14.8px;font-style:italic">elements</span><span class="t" style="left:68.5px;top:14.8px;">List</span>
<svg class="abs" style="left:32px;top:30.5px" width="7" height="4" viewBox="0 0 7 4"><path d="M0 0H7L3.5 4Z" fill="#5b9bd5"/></svg><span class="t" style="left:39.5px;top:25.8px;font-style:italic">0</span><span class="t" style="left:47px;top:25.8px;">List</span>
<span class="abs" style="left:65px;top:35px;width:151px;height:15px;background:#ffe600;border-radius:2px"></span>
<span class="abs" style="left:65px;top:50px;width:151px;height:15px;background:#ffe600;border-radius:2px"></span>
<span class="ix" style="left:48px;top:39px">0</span><span class="t" style="left:66.39999999999998px;top:38.8px;color:#a8962a">Basic Wall-Generic - 200mm-3618</span>
<span class="ix" style="left:48px;top:54px">1</span><span class="t" style="left:66.39999999999998px;top:53.8px;color:#a8962a">Basic Wall-Generic - 200mm-3618</span>
<span class="ix" style="left:48px;top:70px">2</span><span class="t" style="left:66.39999999999998px;top:69.8px;">Port_361844</span>
<span class="id" style="left:131px;top:68px">289889</span>
<span class="abs" style="left:174px;top:73px;width:10px;height:2px;border-radius:1px;background:#f0500f"></span>
<span class="ix" style="left:48px;top:85px">3</span><span class="t" style="left:66.39999999999998px;top:84.8px;">Port_361844</span>
<span class="id" style="left:131px;top:83px">289898</span>
<span class="abs" style="left:174px;top:86px;width:8px;height:2px;border-radius:1px;background:#2fd916"></span>
<span class="ix" style="left:48px;top:100px">4</span><span class="t" style="left:66.39999999999998px;top:99.8px;">Port_362751</span>
<span class="id" style="left:131px;top:98px">290089</span>
<span class="abs" style="left:174px;top:101px;width:8px;height:2px;border-radius:1px;background:#1155ee"></span>
<span class="ix" style="left:48px;top:116px">5</span><span class="t" style="left:66.39999999999998px;top:115.8px;">Port_362751</span>
<span class="id" style="left:131px;top:114px">290090</span>
<span class="abs" style="left:174px;top:117px;width:10px;height:2px;border-radius:1px;background:#5a14c0"></span>
<svg class="abs" style="left:19px;top:133.5px" width="7" height="4" viewBox="0 0 7 4"><path d="M0 0H7L3.5 4Z" fill="#5b9bd5"/></svg><span class="t" style="left:27px;top:128.8px;font-style:italic">transform</span><span class="t" style="left:73.5px;top:128.8px;">List</span>
<span class="ix" style="left:36px;top:139px">0</span><span class="t" style="left:53.80000000000001px;top:138.8px;">CoordinateSystem(Origin = Point(X</span>
<span class="vl" style="left:11px;top:14px;height:134px"></span><span class="abs" style="left:10px;top:147px;width:3px;height:3px;border-radius:50%;background:#b0b0b0"></span><span class="vl" style="left:22px;top:25px;height:101px"></span><span class="abs" style="left:21px;top:125px;width:3px;height:3px;border-radius:50%;background:#b0b0b0"></span><span class="vl" style="left:22px;top:138px;height:10px"></span><span class="abs" style="left:21px;top:147px;width:3px;height:3px;border-radius:50%;background:#b0b0b0"></span><span class="vl" style="left:35px;top:36px;height:90px"></span><span class="abs" style="left:34px;top:125px;width:3px;height:3px;border-radius:50%;background:#b0b0b0"></span>
</div>
<div class="cnl" style="left:322px;top:308px;width:161px;height:25px;line-height:25px">Custom Node: spring nodes v.203.1.0</div>
<div class="ctl" style="left:848px;top:23px;width:133px;height:32px"></div>
<div class="abs" style="left:914px;top:24px;width:1px;height:30px;background:#e6e6e6"></div>
<svg class="abs" style="left:848px;top:23px" width="133" height="32" viewBox="848 23 133 32">
<g fill="none" stroke="#8c8c8c" stroke-width="1.2">
<circle cx="865.4" cy="40" r="6.4"/>
<path d="M870 41.8L877.4 29.3L884.7 41.8Z"/>
<path d="M888.3 34.8H898.8V45.2H888.3ZM888.3 34.8L892.6 30.6H903.2L898.8 34.8M903.2 30.6V41L898.8 45.2"/>
</g>
<g fill="#bfe0fb" stroke="#2b9bf4" stroke-width="1.1">
<path d="M938.7 33.5L957 38M946 45L950 45L954 39.5L957 39" fill="none" stroke="#5bb4f7"/>
<rect x="926.6" y="30.6" width="12" height="7"/>
<rect x="926.6" y="30.6" width="12" height="2" fill="#2b9bf4"/>
<rect x="933" y="43" width="13" height="4"/>
<rect x="957.2" y="33" width="15" height="10"/>
<rect x="957.2" y="33" width="15" height="2" fill="#2b9bf4"/>
</g>
</svg>
<div class="ctl" style="left:950px;top:68px;width:31px;height:89px"></div>
<div class="ctl" style="left:950px;top:167px;width:31px;height:31px"></div>
<svg class="abs" style="left:950px;top:68px" width="31" height="130" viewBox="950 68 31 130">
<g fill="none" stroke="#808080" stroke-width="1.6">
<path d="M958 81V76.5H962.5M967.5 76.5H972V81M972 86V90.5H967.5M962.5 90.5H958V86" stroke-width="2.2"/>
<path d="M958.5 113H971.5M965 106.5V119.5" stroke-width="2.2"/>
<path d="M958.5 141.7H971.5" stroke-width="2.2"/>
<path d="M957.5 182.5H972.5M965 175V190" stroke-width="1.9"/>
</g>
<g fill="#808080">
<path d="M965 172.8L968.2 176.8H961.8Z"/>
<path d="M965 192.2L968.2 188.2H961.8Z"/>
<path d="M955.3 182.5L959.3 179.3V185.7Z"/>
<path d="M974.7 182.5L970.7 179.3V185.7Z"/>
</g>
</svg>

<svg class="abs" style="left:0;top:0;pointer-events:none" width="1461" height="786" viewBox="0 0 1461 786"><path d="M881.3 247.6C877.8 247.6 868.5 247.8 860.0 247.8C851.5 247.8 841.9 247.7 830.0 247.7C818.1 247.7 801.1 247.6 788.7 248.0C776.4 248.4 766.9 249.7 755.9 250.3C744.9 251.0 730.5 251.1 723.0 251.9C715.5 252.7 718.9 252.8 710.7 255.2C702.5 257.6 684.7 263.2 673.7 266.5C662.8 269.8 653.2 272.5 645.0 274.7C636.8 276.9 630.0 277.8 624.5 279.5C619.0 281.2 616.1 282.4 612.0 285.0C607.9 287.6 603.5 291.9 599.8 295.3C596.0 298.7 592.9 301.6 589.5 305.5C586.1 309.4 581.9 314.1 579.3 318.9C576.7 323.6 575.4 328.8 574.0 334.0C572.6 339.2 571.3 343.3 570.8 350.0C570.3 356.7 569.8 366.8 570.9 374.3C572.0 381.8 574.7 388.0 577.5 394.9C580.3 401.8 583.2 408.9 587.8 415.5C592.4 422.1 597.6 428.1 605.0 434.4C612.4 440.7 621.5 447.9 632.4 453.3C643.3 458.7 656.5 463.1 670.2 467.0C684.0 470.9 699.4 473.9 714.9 476.6C730.4 479.4 747.0 481.7 763.0 483.5C779.0 485.3 796.1 486.8 811.0 487.6C825.9 488.4 839.7 488.9 852.3 488.3C864.9 487.7 876.3 486.3 886.6 484.2C896.9 482.1 906.1 478.8 914.1 475.6C922.1 472.5 928.4 469.6 934.7 465.3C941.0 461.0 947.0 455.2 951.9 449.8C956.8 444.4 960.5 439.6 963.9 432.7C967.3 425.8 970.3 416.6 972.5 408.6C974.7 400.6 976.1 392.6 977.0 384.6C977.9 376.6 977.8 367.9 978.0 360.5C978.2 353.1 978.2 345.4 978.0 340.0C977.8 334.6 977.3 332.1 976.5 328.0C975.7 323.9 974.3 318.9 973.0 315.4C971.7 311.9 970.7 310.0 968.8 307.0C966.9 304.0 964.6 300.2 961.8 297.2C959.0 294.2 956.0 291.8 952.0 288.8C948.0 285.8 942.7 282.3 938.0 279.0C933.3 275.7 928.2 272.0 924.0 269.2C919.8 266.4 916.3 263.9 912.8 262.2C909.3 260.4 906.3 259.6 903.0 258.7C899.7 257.8 896.7 257.7 893.2 256.6C889.7 255.6 885.0 253.5 882.0 252.4C879.0 251.3 876.2 250.7 875.0 250.3" fill="none" stroke="#dc1616" stroke-width="2.6" stroke-linecap="round" stroke-linejoin="round"/></svg>
</div></div>
<div id="rborder"></div></div>
<div id="shadow"></div>
</body></html>
